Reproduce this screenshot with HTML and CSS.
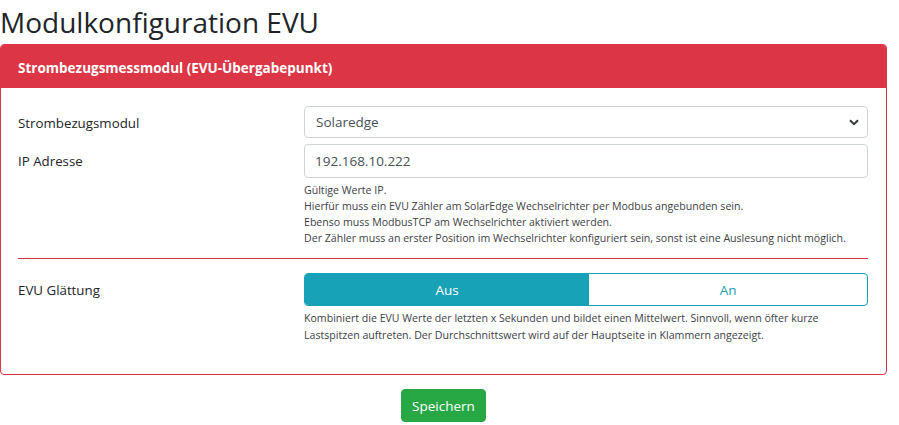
FILE: index.html
```html
<!DOCTYPE html>
<html lang="de">
<head>
<meta charset="utf-8">
<title>Modulkonfiguration EVU</title>
<link rel="stylesheet" href="styles.css">
</head>
<body>
<h1 class="page-title">Modulkonfiguration EVU</h1>
<div class="card">
  <div class="card-header">Strombezugsmessmodul (EVU-Übergabepunkt)</div>
  <div class="card-body">
    <div class="form-row">
      <label class="form-label">Strombezugsmodul</label>
      <div class="form-field">
        <div class="select">
          <span class="select-value">Solaredge</span>
          <svg class="select-arrow" width="10" height="7" viewBox="0 0 10 7"><path d="M1 1.2 L5 5.2 L9 1.2" fill="none" stroke="#343a40" stroke-width="2"/></svg>
        </div>
      </div>
    </div>
    <div class="form-row">
      <label class="form-label">IP Adresse</label>
      <div class="form-field">
        <div class="input">192.168.10.222</div>
        <div class="help">
          Gültige Werte IP.<br>
          Hierfür muss ein EVU Zähler am SolarEdge Wechselrichter per Modbus angebunden sein.<br>
          Ebenso muss ModbusTCP am Wechselrichter aktiviert werden.<br>
          Der Zähler muss an erster Position im Wechselrichter konfiguriert sein, sonst ist eine Auslesung nicht möglich.
        </div>
      </div>
    </div>
    <hr class="divider">
    <div class="form-row">
      <label class="form-label">EVU Glättung</label>
      <div class="form-field">
        <div class="toggle">
          <span class="toggle-btn active">Aus</span>
          <span class="toggle-btn">An</span>
        </div>
        <div class="help help-2">Kombiniert die EVU Werte der letzten x Sekunden und bildet einen Mittelwert. Sinnvoll, wenn öfter kurze Lastspitzen auftreten. Der Durchschnittswert wird auf der Hauptseite in Klammern angezeigt.</div>
      </div>
    </div>
  </div>
</div>
<div class="actions">
  <button class="btn-save">Speichern</button>
</div>
</body>
</html>
```

FILE: styles.css
```css
* { box-sizing: border-box; }
body {
  margin: 0;
  font-family: "Open Sans", "Noto Sans", sans-serif;
  color: #212529;
  background: #fff;
  width: 887px;
}
.page-title {
  margin: 0;
  height: 44px;
  font-size: 28px;
  font-weight: 500;
  line-height: 44px;
  padding-left: 0;
}
.card {
  border: 1px solid #dc3545;
  border-radius: 4px;
  overflow: hidden;
}
.card-header {
  background: #dc3545;
  color: #fff;
  font-weight: 700;
  font-size: 13.5px;
  height: 43px;
  line-height: 46px;
  padding-left: 17px;
}
.card-body {
  padding: 18px 18px 0 17px;
  height: 286px;
}
.form-row {
  display: grid;
  grid-template-columns: 286px 1fr;
  margin-bottom: 5px;
}
.form-label {
  font-size: 13.3px;
  display: flex;
  align-items: center;
  height: 33px;
}
.select, .input {
  border: 1px solid #ced4da;
  border-radius: 4px;
  height: 32px;
  font-size: 13.5px;
  color: #495057;
  display: flex;
  align-items: center;
  padding-left: 11px;
}
.select { justify-content: space-between; padding-right: 8px; }
.input { height: 34px; padding-left: 10px; }
.help {
  font-size: 10.6px;
  line-height: 16px;
  color: #3d4246;
  padding-top: 4px;
}
.divider {
  border: 0;
  border-top: 1px solid #dc3545;
  margin: 12px 0 14px;
}
.toggle {
  display: flex;
  height: 33px;
  border: 1px solid #17a2b8;
  border-radius: 4px;
  overflow: hidden;
}
.toggle-btn {
  flex: 1 1 auto;
  display: flex;
  align-items: center;
  justify-content: center;
  font-size: 13.5px;
  color: #17a2b8;
}
.toggle-btn.active { background: #17a2b8; color: #fff; }
.help-2 { line-height: 17px; padding-top: 4px; }
.actions {
  display: flex;
  justify-content: center;
  padding-top: 14px;
}
.btn-save {
  background: #28a745;
  border: 1px solid #28a745;
  color: #fff;
  border-radius: 4px;
  height: 33px;
  width: 85px;
  font-family: inherit;
  font-size: 13.5px;
  padding: 0;
}
```
